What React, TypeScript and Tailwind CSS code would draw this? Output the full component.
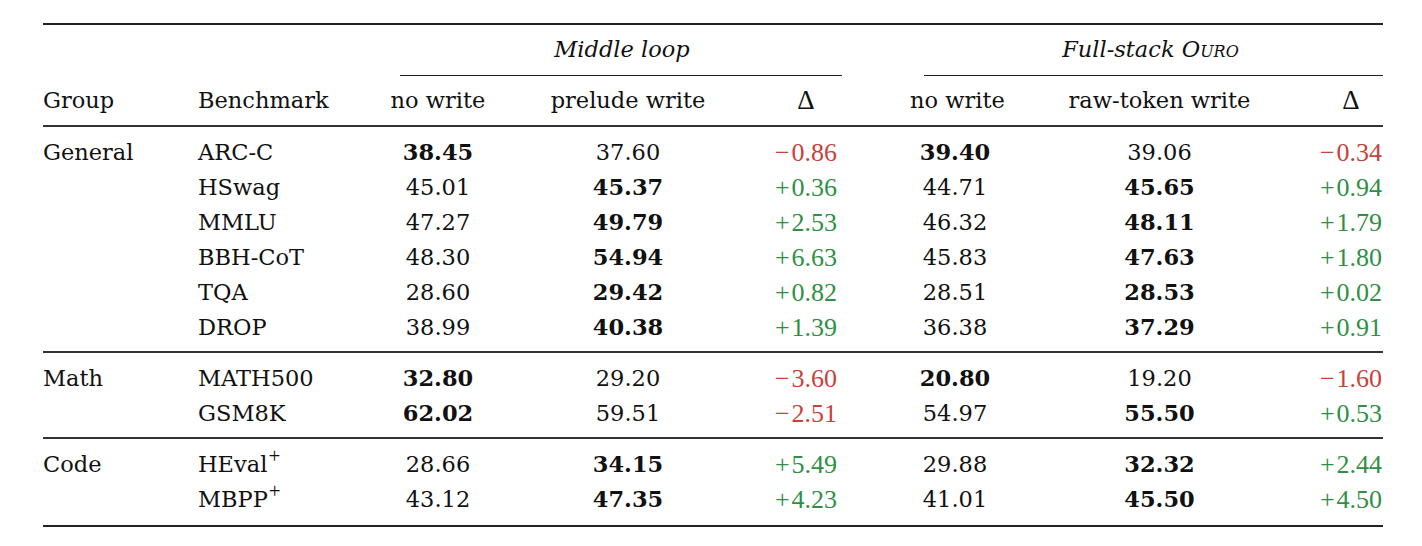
type Row = {
  name: string;
  sup?: boolean;
  mid: [string, string, string];
  full: [string, string, string];
};

type Group = { label: string; rows: Row[] };

const groups: Group[] = [
  {
    label: 'General',
    rows: [
      { name: 'ARC-C', mid: ['38.45', '37.60', '-0.86'], full: ['39.40', '39.06', '-0.34'] },
      { name: 'HSwag', mid: ['45.01', '45.37', '+0.36'], full: ['44.71', '45.65', '+0.94'] },
      { name: 'MMLU', mid: ['47.27', '49.79', '+2.53'], full: ['46.32', '48.11', '+1.79'] },
      { name: 'BBH-CoT', mid: ['48.30', '54.94', '+6.63'], full: ['45.83', '47.63', '+1.80'] },
      { name: 'TQA', mid: ['28.60', '29.42', '+0.82'], full: ['28.51', '28.53', '+0.02'] },
      { name: 'DROP', mid: ['38.99', '40.38', '+1.39'], full: ['36.38', '37.29', '+0.91'] },
    ],
  },
  {
    label: 'Math',
    rows: [
      { name: 'MATH500', mid: ['32.80', '29.20', '-3.60'], full: ['20.80', '19.20', '-1.60'] },
      { name: 'GSM8K', mid: ['62.02', '59.51', '-2.51'], full: ['54.97', '55.50', '+0.53'] },
    ],
  },
  {
    label: 'Code',
    rows: [
      { name: 'HEval', sup: true, mid: ['28.66', '34.15', '+5.49'], full: ['29.88', '32.32', '+2.44'] },
      { name: 'MBPP', sup: true, mid: ['43.12', '47.35', '+4.23'], full: ['41.01', '45.50', '+4.50'] },
    ],
  },
];

const grid =
  'grid grid-cols-[155px_190px_100px_280px_76px_66px_90px_319px_64px] items-center whitespace-nowrap';

function Num({ value, bold }: { value: string; bold: boolean }) {
  return <div className={`text-center ${bold ? 'font-bold' : ''}`}>{value}</div>;
}

function Delta({ value }: { value: string }) {
  const neg = value.startsWith('-');
  return (
    <div
      className={`text-center font-['Liberation_Serif',serif] text-[26px] ${
        neg ? 'text-[#c8423a]' : 'text-[#2f8f46]'
      }`}
    >
      <span className="mr-[2px]">{neg ? '\u2212' : '+'}</span>
      {value.slice(1)}
    </div>
  );
}

function Cells({ v }: { v: [string, string, string] }) {
  const a = parseFloat(v[0]);
  const b = parseFloat(v[1]);
  return (
    <>
      <Num value={v[0]} bold={a > b} />
      <Num value={v[1]} bold={b > a} />
      <Delta value={v[2]} />
    </>
  );
}

export default function App() {
  return (
    <div className="bg-white min-h-[546px] pt-[23px] pl-[43px] font-['DejaVu_Serif',serif] text-[22.5px] text-[#111]">
      <div className="w-[1340px]">
        <div className="h-[2px] bg-[#222]" />

        {/* spanning headers */}
        <div className={`${grid} h-[50px]`}>
          <div className="col-start-3 col-span-3 pl-[12px] text-center italic">Middle loop</div>
          <div className="col-start-7 col-span-3 pl-[8px] text-center italic">
            Full-stack <span className="[font-variant:small-caps]">Ouro</span>
          </div>
        </div>
        <div className={grid}>
          <div className="col-start-3 col-span-3 ml-[12px] mr-[2px] h-px bg-[#222]" />
          <div className="col-start-7 col-span-3 ml-[14px] h-px bg-[#222]" />
        </div>

        <div className={`${grid} h-[49px] leading-[49px]`}>
          <div>Group</div>
          <div>Benchmark</div>
          <div className="text-center">no write</div>
          <div className="text-center">prelude write</div>
          <div className="text-center font-['Liberation_Serif',serif] text-[27px]">Δ</div>
          <div />
          <div className="text-center">no write</div>
          <div className="text-center">raw-token write</div>
          <div className="text-center font-['Liberation_Serif',serif] text-[27px]">Δ</div>
        </div>

        {groups.map((g, gi) => (
          <div key={g.label}>
            <div className="h-[2px] bg-[#333]" />
            <div className={`pt-[8px] ${gi === groups.length - 1 ? 'pb-[8px]' : 'pb-[6px]'}`}>
              {g.rows.map((r, ri) => (
                <div key={r.name} className={`${grid} h-[35px] leading-[35px]`}>
                  <div>{ri === 0 ? g.label : ''}</div>
                  <div>
                    {r.name}
                    {r.sup && (
                      <sup className="font-['Liberation_Serif',serif] text-[21px] ml-[1px] top-[-0.45em]">+</sup>
                    )}
                  </div>
                  <Cells v={r.mid} />
                  <div />
                  <Cells v={r.full} />
                </div>
              ))}
            </div>
          </div>
        ))}
        <div className="h-[2px] bg-[#222]" />
      </div>
    </div>
  );
}
